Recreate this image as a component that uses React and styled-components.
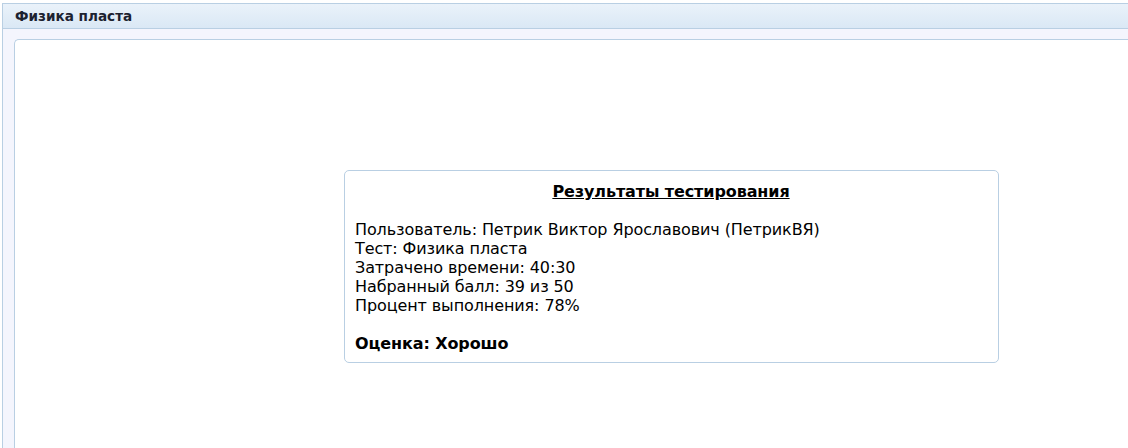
import React from "react";
import styled, { createGlobalStyle } from "styled-components";

const Global = createGlobalStyle`
  html, body { margin: 0; padding: 0; background: #fff; }
  body { font-family: "DejaVu Sans", Verdana, sans-serif; color: #000; overflow: hidden; }
`;

const Page = styled.div`
  width: 1128px;
  height: 448px;
  padding: 3px 0 0 2px;
  box-sizing: border-box;
  overflow: hidden;
`;

const Panel = styled.div`
  display: flex;
  flex-direction: column;
  width: 1200px;
  height: 520px;
  border: 1px solid #b9cfe3;
  border-right: none;
  border-bottom: none;
`;

const Header = styled.div`
  height: 24px;
  display: flex;
  align-items: center;
  padding-left: 12px;
  background: linear-gradient(#eaf2fa, #dae8f5);
  border-bottom: 1px solid #b9cfe3;
  font-size: 13.6px;
  font-weight: bold;
  color: #1c2230;
`;

const Body = styled.div`
  flex: 1;
  background: #f4f5fd;
  padding: 10px 0 0 11px;
  display: flex;
`;

const Inner = styled.div`
  flex: 1;
  background: #fff;
  border: 1px solid #b9cfe3;
  border-right: none;
  border-bottom: none;
  border-top-left-radius: 5px;
  padding: 130px 0 0 329px;
`;

const Card = styled.div`
  width: 632px;
  border: 1px solid #b9cfe3;
  border-radius: 5px;
  padding: 11px 11px 9px 10px;
  font-size: 16px;
  letter-spacing: -0.1px;
  line-height: 19px;
  color: #000;
`;

const Title = styled.div`
  text-align: center;
  font-weight: bold;
  text-decoration: underline;
`;

const Line = styled.div`
  white-space: nowrap;
`;

const Gap = styled.div`
  height: 19px;
`;

const Grade = styled.div`
  font-weight: bold;
`;

export default function App() {
  const rows = [
    "Пользователь: Петрик Виктор Ярославович (ПетрикВЯ)",
    "Тест: Физика пласта",
    "Затрачено времени: 40:30",
    "Набранный балл: 39 из 50",
    "Процент выполнения: 78%",
  ];
  return (
    <>
      <Global />
      <Page>
        <Panel>
          <Header>Физика пласта</Header>
          <Body>
            <Inner>
              <Card>
                <Title>Результаты тестирования</Title>
                <Gap />
                {rows.map((r) => (
                  <Line key={r}>{r}</Line>
                ))}
                <Gap />
                <Grade>Оценка: Хорошо</Grade>
              </Card>
            </Inner>
          </Body>
        </Panel>
      </Page>
    </>
  );
}
